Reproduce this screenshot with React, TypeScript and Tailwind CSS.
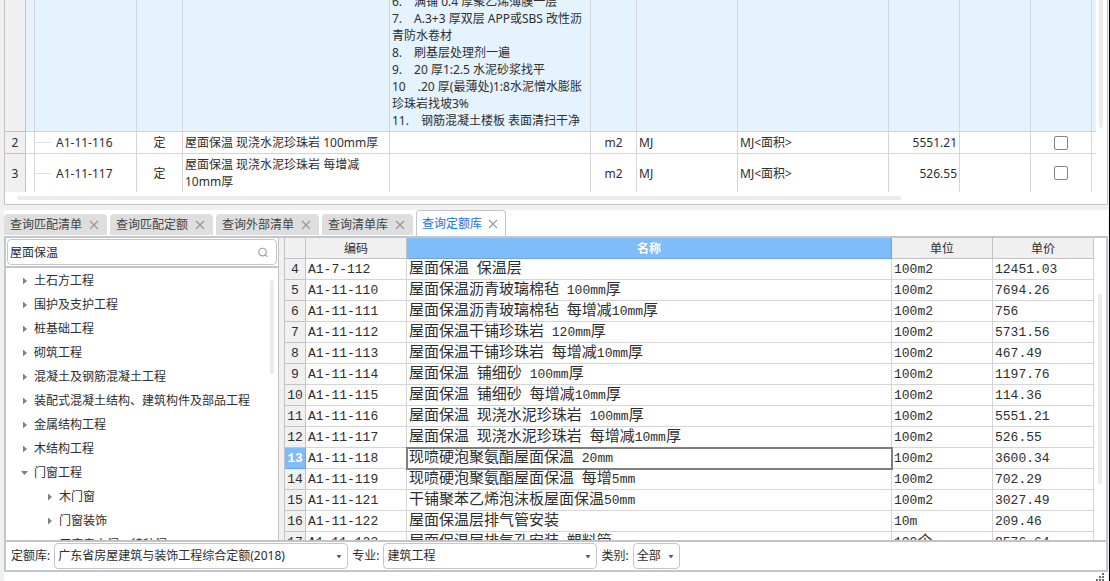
import React from "react";

const LINE = "border-[#d5d5d7]";

function CloseIcon() {
  return (
    <svg width="10" height="10" viewBox="0 0 10 10" className="shrink-0" aria-hidden="true">
      <path d="M1 1 L9 9 M9 1 L1 9" stroke="#9a9a9a" strokeWidth="1.2" fill="none" />
    </svg>
  );
}

const FEATURES = [
  "6.\u3000满铺 0.4 厚聚乙烯薄膜一层",
  "7.\u3000A.3+3 厚双层 APP或SBS 改性沥",
  "青防水卷材",
  "8.\u3000刷基层处理剂一遍",
  "9.\u300020 厚1:2.5 水泥砂浆找平",
  "10\u3000.20 厚(最薄处)1:8水泥憎水膨胀",
  "珍珠岩找坡3%",
  "11.\u3000钢筋混凝土楼板 表面清扫干净",
];

const BILL_ROWS = [
  { no: 2, code: "A1-11-116", name: ["屋面保温 现浇水泥珍珠岩 100mm厚"], qty: "5551.21", row: "h-[22px]", edge: "border-b" },
  { no: 3, code: "A1-11-117", name: ["屋面保温 现浇水泥珍珠岩 每增减", "10mm厚"], qty: "526.55", row: "h-[38px]", edge: "" },
];

function BillTable() {
  const blue = `border-r border-b ${LINE} p-0`;
  return (
    <table className="w-full table-fixed border-separate border-spacing-0 leading-[17px]">
      <colgroup>
        <col className="w-[21px]" />
        <col className="w-[9px]" />
        <col className="w-[102px]" />
        <col className="w-[46px]" />
        <col />
        <col className="w-[201px]" />
        <col className="w-[46px]" />
        <col className="w-[101px]" />
        <col className="w-[151px]" />
        <col className="w-[71px]" />
        <col className="w-[71px]" />
        <col className="w-[61px]" />
        <col className="w-[4px]" />
      </colgroup>
      <tbody>
        <tr className="bg-[#e5f3ff]">
          <td className="border-r border-b border-[#c3c3c6] bg-[#f0f0f0] p-0" />
          <td className={blue} />
          <td className={blue} />
          <td className={blue} />
          <td className={blue} />
          <td className={blue}>
            <div className="flex h-[131px] flex-col justify-end overflow-hidden pb-0.5 pl-0.5 whitespace-nowrap">
              {FEATURES.map((line) => (
                <div key={line} className="shrink-0">{line}</div>
              ))}
            </div>
          </td>
          <td className={blue} />
          <td className={blue} />
          <td className={blue} />
          <td className={blue} />
          <td className={blue} />
          <td className={blue} />
          <td className={`border-b ${LINE} p-0`} />
        </tr>
        {BILL_ROWS.map((r) => {
          const cell = `border-r ${r.edge} ${LINE} py-0`;
          return (
            <tr key={r.no} className={r.row}>
              <td className={`border-r ${r.edge} border-[#c3c3c6] bg-[#f0f0f0] p-0 text-center`}>{r.no}</td>
              <td className={`${cell} px-0`} />
              <td className={`${cell} px-0`}>
                <div className="flex items-center gap-[5px]">
                  <span className="h-px w-4 bg-[#e0e0e0]" />
                  {r.code}
                </div>
              </td>
              <td className={`${cell} px-0 text-center`}>定</td>
              <td className={`${cell} px-0.5 whitespace-nowrap`}>
                {r.name.map((n) => (
                  <div key={n}>{n}</div>
                ))}
              </td>
              <td className={`${cell} px-0.5`} />
              <td className={`${cell} px-0 text-center`}>m2</td>
              <td className={`${cell} px-0.5`}>MJ</td>
              <td className={`${cell} px-0.5`}>MJ&lt;面积&gt;</td>
              <td className={`${cell} px-0.5 text-right`}>{r.qty}</td>
              <td className={`${cell} px-0.5`} />
              <td className={`${cell} px-0`}>
                <input
                  type="checkbox"
                  aria-label={r.code}
                  className="mx-auto block size-[14px] appearance-none rounded-[2px] border border-[#858585] bg-white"
                />
              </td>
              <td className={`${r.edge} ${LINE} p-0`} />
            </tr>
          );
        })}
      </tbody>
    </table>
  );
}

const TABS = ["查询匹配清单", "查询匹配定额", "查询外部清单", "查询清单库", "查询定额库"];

function Tabs() {
  return (
    <div className="flex h-[26px] shrink-0 items-end gap-[3px]" role="tablist">
      {TABS.map((t) =>
        t === "查询定额库" ? (
          <button key={t} type="button" role="tab" aria-selected="true" className="flex h-[26px] items-center gap-1.5 rounded-t border border-b-0 border-[#c3c6cc] bg-white pr-[7px] pl-[5px] text-[#1a73e0]">
            {t}
            <CloseIcon />
          </button>
        ) : (
          <button key={t} type="button" role="tab" aria-selected="false" className="mb-px flex h-[21px] items-center gap-[7px] rounded-t bg-[#dedede] pr-2 pl-1.5 text-[#444]">
            {t}
            <CloseIcon />
          </button>
        )
      )}
    </div>
  );
}

const TREE = [
  { label: "土石方工程" },
  { label: "围护及支护工程" },
  { label: "桩基础工程" },
  { label: "砌筑工程" },
  { label: "混凝土及钢筋混凝土工程" },
  { label: "装配式混凝土结构、建筑构件及部品工程" },
  { label: "金属结构工程" },
  { label: "木结构工程" },
  { label: "门窗工程", open: true },
  { label: "木门窗", child: true },
  { label: "门窗装饰", child: true },
  { label: "厂库房大门、特种门", child: true },
];

function Sidebar() {
  return (
    <aside className="flex w-[273px] shrink-0 flex-col border-r border-[#c3c3c6]">
      <div className="border-b-2 border-[#c3c6cc] p-px">
        <label className="flex h-[26px] items-center rounded border border-[#c6c6c6] pr-2 pl-0.5">
          <input type="text" aria-label="搜索" defaultValue="屋面保温" className="min-w-0 flex-1 bg-transparent pt-0.5 outline-none" />
          <svg width="10" height="11" viewBox="0 0 11 11" fill="none" stroke="#a0a0a0" strokeWidth="1.2" aria-hidden="true">
            <circle cx="5" cy="5" r="4.2" />
            <path d="M7.8 7.8 L10.4 10.4" />
          </svg>
        </label>
      </div>
      <div className="relative min-h-0 flex-1 overflow-hidden">
        <ul className="pt-px">
          {TREE.map((n) => (
            <li key={n.label} className={n.child ? "flex h-6 items-center gap-1.5 pl-[41px]" : "flex h-6 items-center gap-1.5 pl-4"}>
              <svg width="6" height="8" viewBox="0 0 6 8" fill="#808080" className="shrink-0 overflow-visible" aria-hidden="true">
                {n.open ? <path d="M-1 2 H6 L2.5 6 Z" /> : <path d="M1 0.5 L5 4 L1 7.5 Z" />}
              </svg>
              <span className="whitespace-nowrap">{n.label}</span>
            </li>
          ))}
        </ul>
        <div className="absolute top-3 right-1 h-[94px] w-1 rounded-full bg-[#ebebeb]" />
      </div>
    </aside>
  );
}

const QUOTA: [number, string, string, string, string][] = [
  [4, "A1-7-112", "屋面保温 保温层", "100m2", "12451.03"],
  [5, "A1-11-110", "屋面保温沥青玻璃棉毡 100mm厚", "100m2", "7694.26"],
  [6, "A1-11-111", "屋面保温沥青玻璃棉毡 每增减10mm厚", "100m2", "756"],
  [7, "A1-11-112", "屋面保温干铺珍珠岩 120mm厚", "100m2", "5731.56"],
  [8, "A1-11-113", "屋面保温干铺珍珠岩 每增减10mm厚", "100m2", "467.49"],
  [9, "A1-11-114", "屋面保温 铺细砂 100mm厚", "100m2", "1197.76"],
  [10, "A1-11-115", "屋面保温 铺细砂 每增减10mm厚", "100m2", "114.36"],
  [11, "A1-11-116", "屋面保温 现浇水泥珍珠岩 100mm厚", "100m2", "5551.21"],
  [12, "A1-11-117", "屋面保温 现浇水泥珍珠岩 每增减10mm厚", "100m2", "526.55"],
  [13, "A1-11-118", "现喷硬泡聚氨酯屋面保温 20mm", "100m2", "3600.34"],
  [14, "A1-11-119", "现喷硬泡聚氨酯屋面保温 每增5mm", "100m2", "702.29"],
  [15, "A1-11-121", "干铺聚苯乙烯泡沫板屋面保温50mm", "100m2", "3027.49"],
  [16, "A1-11-122", "屋面保温层排气管安装", "10m", "209.46"],
  [17, "A1-11-123", "屋面保温层排气孔安装 塑料管", "100个", "8576.64"],
];

/* Han characters are set larger than the monospaced Latin ones. */
function Mixed({ text }: { text: string }) {
  return (
    <>
      {text.split(/([\u4e00-\u9fff]+)/).map((part, i) =>
        i % 2 === 1 ? <span key={i} className="text-[15px]">{part}</span> : part
      )}
    </>
  );
}

function QuotaTable() {
  const head = "border-r border-b border-[#c3c3c6] bg-[#f0f0f0] px-0 pt-0.5 pb-0 font-normal";
  const cell = `h-[21px] border-r border-b ${LINE} pt-0.5 pb-0 pr-0 pl-0.5`;
  return (
    <div className="relative min-w-0 flex-1 overflow-hidden border-l border-[#c3c3c6] pr-3">
      <table className="w-full table-fixed border-separate border-spacing-0 whitespace-nowrap">
        <colgroup>
          <col className="w-[21px]" />
          <col className="w-[101px]" />
          <col />
          <col className="w-[101px]" />
          <col className="w-[101px]" />
        </colgroup>
        <thead>
          <tr className="h-[21px]">
            <th className={head} />
            <th className={head}>编码</th>
            <th className="border-r border-b border-[#68a6ea] bg-[#80bbfa] px-0 pt-0.5 pb-0 font-bold text-white">名称</th>
            <th className={head}>单位</th>
            <th className={head}>单价</th>
          </tr>
        </thead>
        <tbody className="font-['Liberation_Mono','Noto_Sans_CJK_SC',monospace] text-[13px] leading-[18px]">
          {QUOTA.map(([no, code, name, unit, price]) => (
            <tr key={no}>
              <td
                className={
                  no === 13
                    ? "h-[21px] border-r border-b border-[#68a6ea] bg-[#80bbfa] px-0 pt-0.5 pb-0 text-center font-bold text-white"
                    : "h-[21px] border-r border-b border-[#c3c3c6] bg-[#f0f0f0] px-0 pt-0.5 pb-0 text-center"
                }
              >
                {no}
              </td>
              <td className={cell}>{code}</td>
              <td className={no === 13 ? `${cell} outline-2 -outline-offset-1 outline-[#7f7f7f]` : cell}>
                <Mixed text={name} />
              </td>
              <td className={cell}>
                <Mixed text={unit} />
              </td>
              <td className={cell}>{price}</td>
            </tr>
          ))}
        </tbody>
      </table>
      <div className="absolute top-14 right-1 h-[190px] w-1 rounded-full bg-[#ebebeb]" />
    </div>
  );
}

function Picker({ id, label, value, width }: { id: string; label: string; value: string; width: string }) {
  return (
    <div className="flex items-center gap-1">
      <label htmlFor={id}>{label}</label>
      <div className={`relative ${width}`}>
        <select id={id} className="block h-[26px] w-full appearance-none rounded border border-[#c6c6c6] bg-white pl-[3px]">
          <option>{value}</option>
        </select>
        <svg width="6" height="4" viewBox="0 0 6 4" fill="#555b66" className="pointer-events-none absolute top-[12px] right-1.5" aria-hidden="true">
          <path d="M0.5 0 H5.5 L3 3.5 Z" />
        </svg>
      </div>
    </div>
  );
}

export default function App() {
  return (
    <div className="flex h-screen flex-col overflow-hidden border-r border-black bg-[#f0f0f0] pr-px pl-1 font-['Noto_Sans','Noto_Sans_CJK_SC',sans-serif] text-xs text-[#2e2e2e]">
      <section className="relative shrink-0 border-r border-b border-l border-[#c3c3c6] bg-white pr-[11px]">
        <BillTable />
        <div className="mt-1 mb-1 ml-3 h-1 w-[81%] rounded-full bg-[#ebebeb]" />
        <div className="absolute top-0 right-1 h-32 w-1 rounded-b-full bg-[#ebebeb]" />
      </section>
      <section className="mt-[5px] flex min-h-0 flex-1 flex-col bg-white">
        <Tabs />
        <div className="flex min-h-0 flex-1 flex-col border-2 border-[#c3c6cc]">
          <div className="flex min-h-0 flex-1 gap-[5px] bg-[#f0f0f0] *:bg-white">
            <Sidebar />
            <QuotaTable />
          </div>
          <div className="flex h-[30px] shrink-0 items-center gap-1 border-t-2 border-[#c3c3c6] pl-[5px]">
            <Picker id="library" label="定额库:" value="广东省房屋建筑与装饰工程综合定额(2018)" width="w-[294px]" />
            <Picker id="major" label="专业:" value="建筑工程" width="w-[214px]" />
            <Picker id="kind" label="类别:" value="全部" width="w-[47px]" />
          </div>
        </div>
        <div className="flex h-[9px] shrink-0 items-end justify-end pr-1">
          <svg width="8" height="8" viewBox="0 0 8 8" fill="#6f7277" aria-hidden="true">
            <path d="M6 0h2v2H6zM3 3h2v2H3zM6 3h2v2H6zM0 6h2v2H0zM3 6h2v2H3zM6 6h2v2H6z" />
          </svg>
        </div>
      </section>
    </div>
  );
}
